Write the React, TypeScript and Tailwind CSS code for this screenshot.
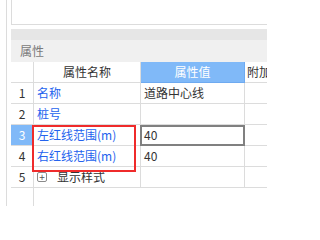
import React from "react";

const line = "border-[#dcdcdc]";

type Row = { n: string; name: string; value: string; kind?: "sel" | "group" };

const rows: Row[] = [
  { n: "1", name: "名称", value: "道路中心线" },
  { n: "2", name: "桩号", value: "" },
  { n: "3", name: "左红线范围(m)", value: "40", kind: "sel" },
  { n: "4", name: "右红线范围(m)", value: "40" },
  { n: "5", name: "显示样式", value: "", kind: "group" },
];

export default function App() {
  return (
    <div className="relative flex h-[206px] w-[267px] overflow-hidden bg-white font-['Noto_Sans_CJK_SC','Microsoft_YaHei',sans-serif] text-[12px] leading-none text-[#333]">
      <div className="w-[6px] shrink-0" />
      <div className={`w-[5px] shrink-0 border-l ${line}`} />
      <div className="flex min-w-0 flex-1 flex-col">
        <div className={`h-[25px] shrink-0 border-b border-l ${line} bg-white`} />
        <div className="h-[4px] shrink-0" />
        <div className="h-[11px] shrink-0 bg-[#e6e6e6]" />
        <div className="flex h-[22px] shrink-0 items-center bg-[#f0f0f0] pl-[9px] text-[#7a7a7a]">属性</div>
        {/* header */}
        <div className="grid h-[21px] shrink-0 grid-cols-[23px_107px_104px_1fr]">
          <div className={`border-b border-r ${line}`} />
          <div className={`flex items-center justify-center border-b border-r ${line}`}>属性名称</div>
          <div className="flex items-center justify-center border-b border-r border-[#6eaaf0] bg-[#80b9f8] text-white">属性值</div>
          <div className={`flex items-center overflow-hidden whitespace-nowrap border-b ${line} pl-[2px]`}>附加值</div>
        </div>
        {rows.map((r) => (
          <div key={r.n} className="grid h-[21px] shrink-0 grid-cols-[23px_107px_104px_1fr]">
            <div
              className={`flex items-center justify-center border-b border-r ${line} ${
                r.kind === "sel" ? "bg-[#80b9f8] text-white" : ""
              }`}
            >
              {r.n}
            </div>
            <div className={`flex items-center gap-[10px] border-b border-r ${line} pl-[3px]`}>
              {r.kind === "group" ? (
                <>
                  <span className="flex h-[10px] w-[10px] items-center justify-center rounded-[2px] border border-[#8a8a8a] text-[10px] leading-none text-[#555]">
                    +
                  </span>
                  <span className="text-[#333]">{r.name}</span>
                </>
              ) : (
                <span className="text-[#2463ee]">{r.name}</span>
              )}
            </div>
            <div className={`relative flex items-center border-b border-r ${line} pl-[3px]`}>
              {r.kind === "sel" && (
                <span className="pointer-events-none absolute bottom-[-1px] left-[-1px] right-[-1px] top-0 border-2 border-[#808080]" />
              )}
              <span className="relative">{r.value}</span>
            </div>
            <div className={`border-b ${line}`} />
          </div>
        ))}
        <div className="flex flex-1">
          <div className={`w-[23px] border-r ${line}`} />
        </div>
      </div>
      {/* red annotation box */}
      <div className="pointer-events-none absolute left-[32px] top-[125px] h-[47px] w-[104px] border-2 border-[#ef2b2b]" />
    </div>
  );
}
